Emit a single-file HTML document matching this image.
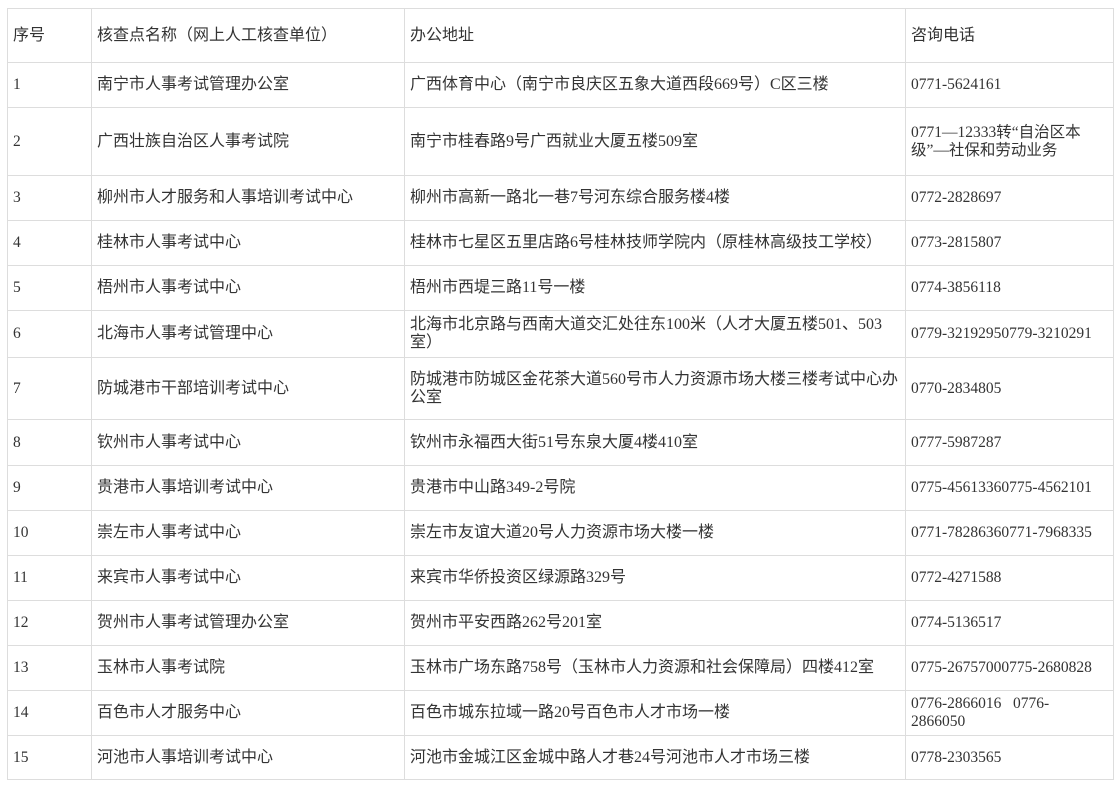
<!DOCTYPE html>
<html><head><meta charset="utf-8"><style>
html,body{margin:0;padding:0;background:#fff;}
table{position:absolute;left:7px;top:8px;border-collapse:collapse;table-layout:fixed;width:1106px;
font-family:"Liberation Serif","Noto Sans CJK SC",serif;font-size:16px;color:#333;}
td{border:1px solid #ddd;padding:0 5px;vertical-align:middle;line-height:18px;overflow:hidden;}
.n{font-size:15.5px;}
</style></head><body>
<table>
<colgroup><col style="width:84px"><col style="width:313px"><col style="width:501px"><col style="width:208px"></colgroup>
<tr style="height:54px"><td>序号</td><td>核查点名称（网上人工核查单位）</td><td>办公地址</td><td>咨询电话</td></tr>
<tr style="height:45px"><td class="n">1</td><td>南宁市人事考试管理办公室</td><td>广西体育中心（南宁市良庆区五象大道西段669号）C区三楼</td><td class="n">0771-5624161</td></tr>
<tr style="height:68px"><td class="n">2</td><td>广西壮族自治区人事考试院</td><td>南宁市桂春路9号广西就业大厦五楼509室</td><td class="n">0771—12333转“自治区本级”—社保和劳动业务</td></tr>
<tr style="height:45px"><td class="n">3</td><td>柳州市人才服务和人事培训考试中心</td><td>柳州市高新一路北一巷7号河东综合服务楼4楼</td><td class="n">0772-2828697</td></tr>
<tr style="height:45px"><td class="n">4</td><td>桂林市人事考试中心</td><td>桂林市七星区五里店路6号桂林技师学院内（原桂林高级技工学校）</td><td class="n">0773-2815807</td></tr>
<tr style="height:45px"><td class="n">5</td><td>梧州市人事考试中心</td><td>梧州市西堤三路11号一楼</td><td class="n">0774-3856118</td></tr>
<tr style="height:47px"><td class="n">6</td><td>北海市人事考试管理中心</td><td>北海市北京路与西南大道交汇处往东100米（人才大厦五楼501、503室）</td><td class="n">0779-32192950779-3210291</td></tr>
<tr style="height:62px"><td class="n">7</td><td>防城港市干部培训考试中心</td><td>防城港市防城区金花茶大道560号市人力资源市场大楼三楼考试中心办公室</td><td class="n">0770-2834805</td></tr>
<tr style="height:46px"><td class="n">8</td><td>钦州市人事考试中心</td><td>钦州市永福西大街51号东泉大厦4楼410室</td><td class="n">0777-5987287</td></tr>
<tr style="height:45px"><td class="n">9</td><td>贵港市人事培训考试中心</td><td>贵港市中山路349-2号院</td><td class="n">0775-45613360775-4562101</td></tr>
<tr style="height:45px"><td class="n">10</td><td>崇左市人事考试中心</td><td>崇左市友谊大道20号人力资源市场大楼一楼</td><td class="n">0771-78286360771-7968335</td></tr>
<tr style="height:45px"><td class="n">11</td><td>来宾市人事考试中心</td><td>来宾市华侨投资区绿源路329号</td><td class="n">0772-4271588</td></tr>
<tr style="height:45px"><td class="n">12</td><td>贺州市人事考试管理办公室</td><td>贺州市平安西路262号201室</td><td class="n">0774-5136517</td></tr>
<tr style="height:45px"><td class="n">13</td><td>玉林市人事考试院</td><td>玉林市广场东路758号（玉林市人力资源和社会保障局）四楼412室</td><td class="n">0775-26757000775-2680828</td></tr>
<tr style="height:45px"><td class="n">14</td><td>百色市人才服务中心</td><td>百色市城东拉域一路20号百色市人才市场一楼</td><td class="n">0776-2866016&nbsp;&nbsp;&nbsp;0776-<br>2866050</td></tr>
<tr style="height:44px"><td class="n">15</td><td>河池市人事培训考试中心</td><td>河池市金城江区金城中路人才巷24号河池市人才市场三楼</td><td class="n">0778-2303565</td></tr>
</table>
</body></html>
